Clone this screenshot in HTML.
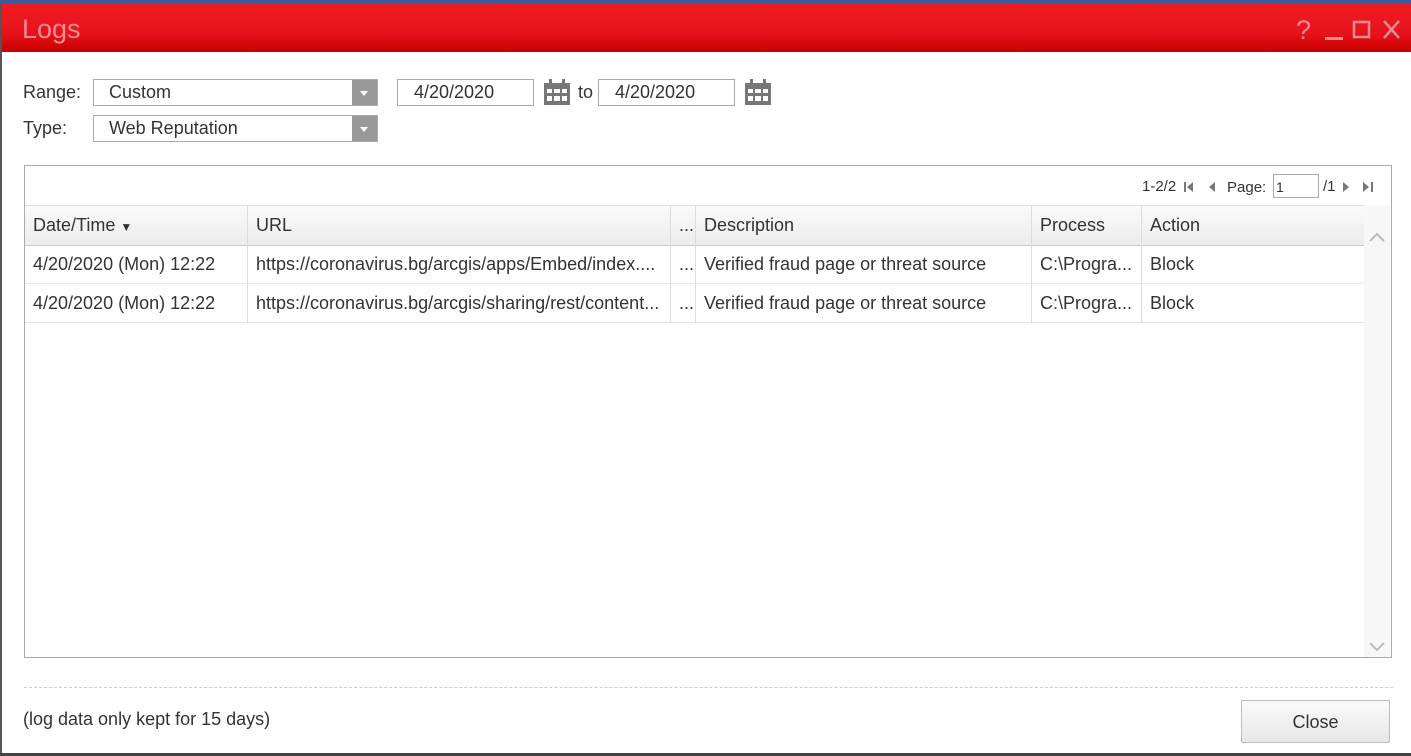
<!DOCTYPE html>
<html><head><style>
body{margin:0;width:1411px;height:756px;overflow:hidden;background:#fff;font-family:"Liberation Sans",Arial,sans-serif;font-size:18px;color:#333;position:relative}
.a{position:absolute}
.top{left:0;top:0;width:1411px;height:3px;background:#3a5ba0}
.title{left:2px;top:3px;width:1409px;height:49px;background:linear-gradient(#ee1c25,#e8141d 60%,#c80000)}
.title span{position:absolute;left:20px;top:11px;font-size:27px;color:#f28a8f}
.lb{left:0;top:3px;width:2px;height:753px;background:#555}
.bb{left:0;top:753px;width:1411px;height:3px;background:#444}
.sel{border:1px solid #aaa;height:25px;background:#fff}
.sel span{position:absolute;left:15px;top:2px}
.sel i{position:absolute;right:0;top:0;width:25px;height:25px;background:#999}
.sel i:after{content:"";position:absolute;left:8px;top:11px;border:4px solid transparent;border-top:5px solid #fff}
.inp{border:1px solid #aaa;height:25px;background:#fff}
.inp span{position:absolute;left:16px;top:2px}
.grid{left:24px;top:165px;width:1366px;height:491px;border:1px solid #aaa}
.hd{top:39px;left:0;width:1339px;height:39px;background:linear-gradient(#fafafa,#ececec);border-top:1px solid #ddd;border-bottom:1px solid #ccc}
.c{position:absolute;top:0;height:100%;border-right:1px solid #ddd;box-sizing:border-box;padding-left:8px;line-height:39px;white-space:nowrap;overflow:hidden}
.row{left:0;width:1339px;height:38px;border-bottom:1px solid #e4e4e4}
.sb{left:1339px;top:39px;width:26px;height:452px;background:#f7f7f7}
</style></head><body>
<div class="a top"></div>
<div class="a title"><span>Logs</span>
<svg class="a" style="left:1294px;top:14px" width="110" height="26"><text x="0" y="22" font-size="27" fill="#f28a8f" font-family="Liberation Sans">?</text><rect x="29" y="20" width="18" height="3" fill="#f28a8f"/><rect x="58" y="5" width="15" height="15" fill="none" stroke="#f28a8f" stroke-width="2.5"/><path d="M88 4L103 21M103 4L88 21" stroke="#f28a8f" stroke-width="2.5"/></svg></div>
<div class="a lb"></div><div class="a bb"></div>
<div class="a" style="left:23px;top:82px">Range:</div>
<div class="a" style="left:23px;top:118px">Type:</div>
<div class="a sel" style="left:93px;top:79px;width:283px"><span>Custom</span><i></i></div>
<div class="a sel" style="left:93px;top:115px;width:283px"><span>Web Reputation</span><i></i></div>
<div class="a inp" style="left:397px;top:79px;width:135px"><span>4/20/2020</span></div>
<div class="a inp" style="left:598px;top:79px;width:135px"><span>4/20/2020</span></div>
<div class="a" style="left:578px;top:82px">to</div>
<svg class="a" style="left:544px;top:79px" width="26" height="26"><rect x="0" y="4" width="26" height="22" fill="#777"/><rect x="5" y="0" width="3" height="7" fill="#777"/><rect x="18" y="0" width="3" height="7" fill="#777"/><g fill="#fff"><rect x="3" y="10" width="5" height="4"/><rect x="10" y="10" width="6" height="4"/><rect x="18" y="10" width="5" height="4"/><rect x="3" y="17" width="5" height="5"/><rect x="10" y="17" width="6" height="5"/><rect x="18" y="17" width="5" height="5"/></g></svg>
<svg class="a" style="left:745px;top:79px" width="26" height="26"><rect x="0" y="4" width="26" height="22" fill="#777"/><rect x="5" y="0" width="3" height="7" fill="#777"/><rect x="18" y="0" width="3" height="7" fill="#777"/><g fill="#fff"><rect x="3" y="10" width="5" height="4"/><rect x="10" y="10" width="6" height="4"/><rect x="18" y="10" width="5" height="4"/><rect x="3" y="17" width="5" height="5"/><rect x="10" y="17" width="6" height="5"/><rect x="18" y="17" width="5" height="5"/></g></svg>
<div class="a grid">
<div class="a" style="left:1117px;top:12px;font-size:15px">1-2/2</div>
<svg class="a" style="left:1158px;top:14px" width="40" height="14"><rect x="1" y="2" width="2" height="10" fill="#777"/><path d="M10 2L4 7L10 12Z" fill="#777"/><path d="M32 2L26 7L32 12Z" fill="#777"/></svg>
<div class="a" style="left:1202px;top:13px;font-size:15px">Page:</div>
<div class="a" style="left:1248px;top:8px;height:24px;border:1px solid #aaa;font-size:14px;line-height:24px;padding-left:2px;box-sizing:border-box;width:46px">1</div>
<div class="a" style="left:1298px;top:12px;font-size:15px">/1</div>
<svg class="a" style="left:1314px;top:14px" width="40" height="14"><path d="M4 2L10 7L4 12Z" fill="#777"/><path d="M24 2L30 7L24 12Z" fill="#777"/><rect x="32" y="2" width="2" height="10" fill="#777"/></svg>
<div class="a hd">
<div class="c" style="left:0;width:223px">Date/Time <span style="font-size:12px">▼</span></div>
<div class="c" style="left:223px;width:423px">URL</div>
<div class="c" style="left:646px;width:25px">...</div>
<div class="c" style="left:671px;width:336px">Description</div>
<div class="c" style="left:1007px;width:110px">Process</div>
<div class="c" style="left:1117px;width:222px;border:0">Action</div>
</div>
<div class="a row" style="top:79px">
<div class="c" style="left:0;width:223px">4/20/2020 (Mon) 12:22</div>
<div class="c" style="left:223px;width:423px">https://coronavirus.bg/arcgis/apps/Embed/index....</div>
<div class="c" style="left:646px;width:25px">...</div>
<div class="c" style="left:671px;width:336px">Verified fraud page or threat source</div>
<div class="c" style="left:1007px;width:110px">C:\Progra...</div>
<div class="c" style="left:1117px;width:222px;border:0">Block</div>
</div>
<div class="a row" style="top:118px">
<div class="c" style="left:0;width:223px">4/20/2020 (Mon) 12:22</div>
<div class="c" style="left:223px;width:423px">https://coronavirus.bg/arcgis/sharing/rest/content...</div>
<div class="c" style="left:646px;width:25px">...</div>
<div class="c" style="left:671px;width:336px">Verified fraud page or threat source</div>
<div class="c" style="left:1007px;width:110px">C:\Progra...</div>
<div class="c" style="left:1117px;width:222px;border:0">Block</div>
</div>
<div class="a sb"><svg class="a" style="left:4px;top:26px" width="18" height="430"><path d="M2 10L9 3L16 10" fill="none" stroke="#bbb" stroke-width="2"/><path d="M2 412L9 419L16 412" fill="none" stroke="#bbb" stroke-width="2"/></svg></div>
</div>
<div class="a" style="left:24px;top:687px;width:1369px;border-top:1px dashed #ccc"></div>
<div class="a" style="left:23px;top:709px;font-size:18px">(log data only kept for 15 days)</div>
<div class="a" style="left:1241px;top:700px;width:147px;height:41px;border:1px solid #bbb;border-radius:2px;background:linear-gradient(#fbfbfb,#e6e6e6);text-align:center;line-height:43px">Close</div>
</body></html>
